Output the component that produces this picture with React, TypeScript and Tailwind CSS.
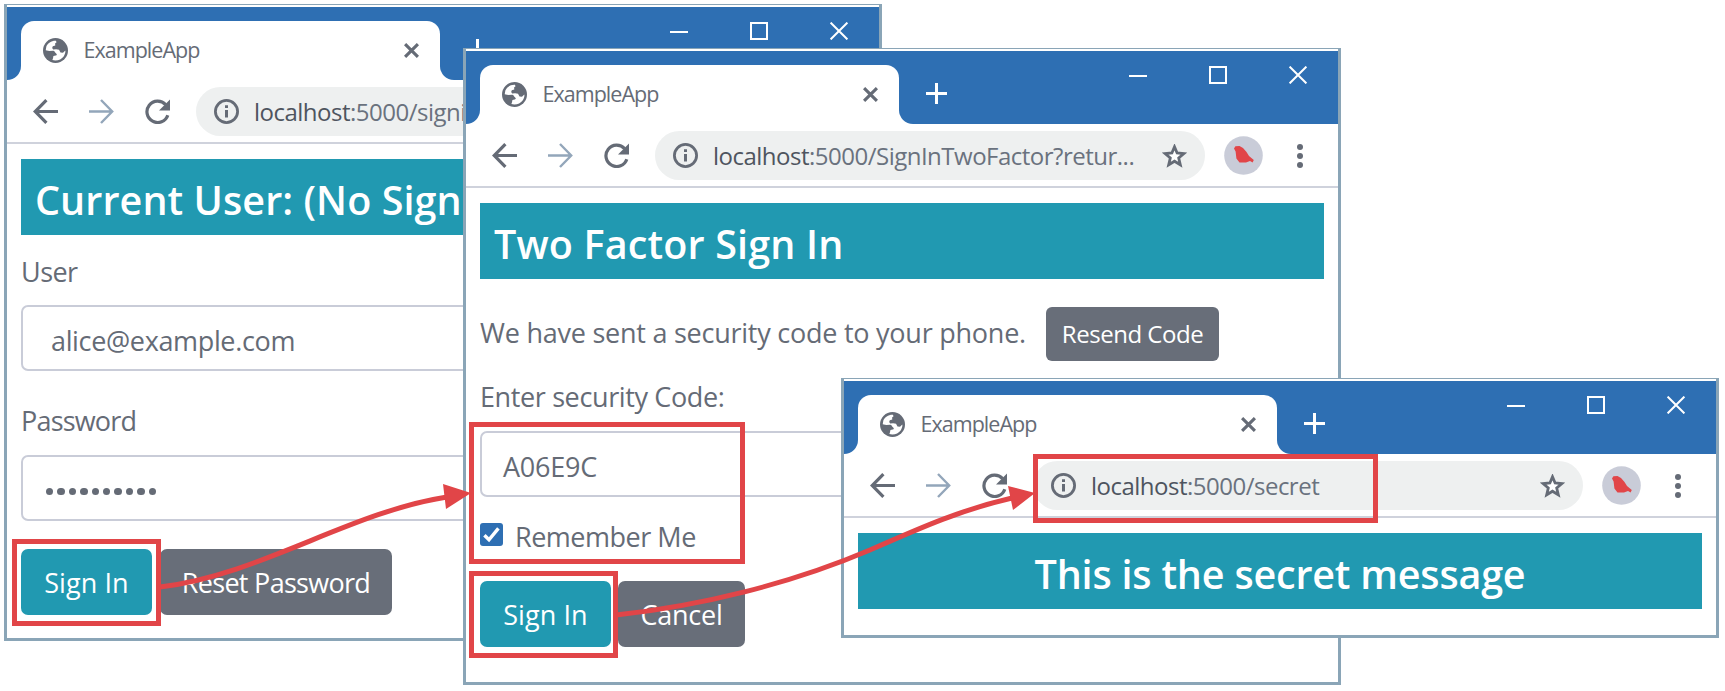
import type { ReactNode } from "react";

function Globe() {
  return (
    <svg viewBox="0 0 24 24" className="h-[25px] w-[25px] shrink-0">
      <circle cx="12" cy="12" r="12" fill="#656b76" />
      <path
        d="M12.4 2.6 C8 2.4 4.6 4.8 3.2 8.2 L2.6 11.8 L6 12.4 L9.8 12.2 C11.4 12.4 11.2 13.8 12.4 14.6 C13.6 15.4 13.6 16.6 12.2 16.8 L10 17.2 L9.6 19.4 L9 21.2 C13.2 22.4 17.6 20.8 20 17.4 C21.2 15.4 21.8 13.2 21.4 12 L19.2 14.2 L16.8 14 L15.4 11.2 L12.6 10.8 L9.8 11 L8.8 9.6 L9.4 8 L11.8 7.2 L11.6 5.2 L13 4 Z"
        fill="#fff"
      />
    </svg>
  );
}

function Bird() {
  return (
    <svg viewBox="0 0 39 39" className="h-[39px] w-[39px] shrink-0">
      <circle cx="19.5" cy="19.5" r="19.3" fill="#c9ccd8" />
      <path d="M10 12.6 L11.4 10.2 L15.5 10 L19 12 L22.5 16 L25 20 L29.8 24 L28.6 26.4 L26 25 L22 26.4 L15.5 26.4 L12.4 22.5 L11.6 15.5 Z" fill="#e14548" />
    </svg>
  );
}

function TitleBar() {
  return (
    <div className="flex h-[73px] bg-white">
      <div className="w-[14px] rounded-br-[14px] bg-[#2e6fb3]" />
      <div className="flex w-[419px] flex-col bg-[#2e6fb3] pt-[14px]">
        <div className="flex flex-1 items-start rounded-t-[13px] bg-white pl-[22px] pr-[21px] pt-[17px]">
          <Globe />
          <span className="-mt-px ml-[15.5px] text-[21.5px] leading-[25px] tracking-[-0.045em]">ExampleApp</span>
          <svg viewBox="0 0 14 14" className="ml-auto mt-[5px] h-[15px] w-[15px]">
            <path d="M1 1 L13 13 M13 1 L1 13" stroke="#656b76" strokeWidth="2.9" />
          </svg>
        </div>
      </div>
      <div className="flex flex-1 items-start rounded-bl-[14px] bg-[#2e6fb3] pl-[27px] pr-[31px]">
        <svg viewBox="0 0 21 21" className="mt-[32px] h-[21px] w-[21px]">
          <path d="M10.5 0 V21 M0 10.5 H21" stroke="#fff" strokeWidth="3" />
        </svg>
        <div className="ml-auto mt-[15px] flex gap-[62px]">
          <svg viewBox="0 0 18 18" className="h-[18px] w-[18px]">
            <path d="M0 10 H18" stroke="#fff" strokeWidth="2" />
          </svg>
          <svg viewBox="0 0 18 18" className="h-[18px] w-[18px]">
            <rect x="1" y="1" width="16" height="16" fill="none" stroke="#fff" strokeWidth="2" />
          </svg>
          <svg viewBox="0 0 18 18" className="h-[18px] w-[18px]">
            <path d="M0.6 0.6 L17.4 17.4 M17.4 0.6 L0.6 17.4" stroke="#fff" strokeWidth="2" />
          </svg>
        </div>
      </div>
    </div>
  );
}

function Toolbar({ path }: { path: string }) {
  return (
    <div className="flex h-[64px] items-start border-b-2 border-[#cfd2dc] pl-[26px] pt-[7px]">
      <div className="flex h-[49px] items-center gap-[31px]">
        <svg viewBox="0 0 25 25" className="h-[25px] w-[25px]">
          <path d="M25 12.5 H2.4 M13.4 1.2 L2.2 12.5 L13.4 23.8" fill="none" stroke="#656b76" strokeWidth="3.2" />
        </svg>
        <svg viewBox="0 0 25 25" className="h-[25px] w-[25px]">
          <path d="M0 12.5 H23 M12 1 L23.2 12.5 L12 24" fill="none" stroke="#93a6ba" strokeWidth="2.4" />
        </svg>
        <svg viewBox="0 0 25 25" className="h-[25px] w-[25px]">
          <path d="M20.6 5.6 A10.7 10.7 0 1 0 22.8 16.2" fill="none" stroke="#656b76" strokeWidth="3.2" />
          <path d="M25 0.4 V11.4 H14 Z" fill="#656b76" />
        </svg>
      </div>
      <div className="ml-[26px] flex h-[49px] w-[550px] items-center rounded-full bg-[#eef0f0] pl-[18px] pr-[18px]">
        <svg viewBox="0 0 25 25" className="h-[25px] w-[25px] shrink-0">
          <circle cx="12.5" cy="12.5" r="11.1" fill="none" stroke="#656b76" strokeWidth="2.8" />
          <path d="M12.5 11 V18.6 M12.5 6.2 V9" stroke="#656b76" strokeWidth="3" />
        </svg>
        <span className="ml-[15px] whitespace-nowrap text-[24px] leading-[32px] tracking-[-0.021em] text-[#6a727e]">
          <span className="text-[#4e555f]">localhost</span>
          {path}
        </span>
        <svg viewBox="0 0 24 24" className="ml-auto h-[24px] w-[25px] shrink-0">
          <path
            d="M12 2.8 L14.6 9 L21.4 9.6 L16.2 14 L17.8 20.8 L12 17.2 L6.2 20.8 L7.8 14 L2.6 9.6 L9.4 9 Z"
            fill="#fff"
            stroke="#656b76"
            strokeWidth="2.8"
          />
        </svg>
      </div>
      <div className="ml-[19px] mt-[5px] flex items-center">
        <Bird />
        <svg viewBox="0 0 6 24" className="ml-[34px] h-[24px] w-[6px]">
          <circle cx="3" cy="3" r="3" fill="#656b76" />
          <circle cx="3" cy="12" r="3" fill="#656b76" />
          <circle cx="3" cy="21" r="3" fill="#656b76" />
        </svg>
      </div>
    </div>
  );
}

function BrowserWindow({ place, path, children }: { place: string; path: string; children: ReactNode }) {
  return (
    <div className={`absolute w-[878px] overflow-hidden border-x-3 border-b-3 border-t border-[#8aa5b7] bg-white pt-[2px] ${place}`}>
      <TitleBar />
      <Toolbar path={path} />
      <div className="px-[14px] pt-[15px]">{children}</div>
    </div>
  );
}

function Banner({ children, look }: { children: ReactNode; look: string }) {
  return (
    <h1
      className={`h-[76px] whitespace-nowrap bg-[#2199b1] px-[14px] pt-[11px] text-[39.5px] font-semibold leading-[60px] text-white ${look}`}
    >
      {children}
    </h1>
  );
}

function Button({ children, look }: { children: ReactNode; look: string }) {
  return (
    <button
      className={`flex h-[66px] items-center justify-center whitespace-nowrap rounded-[7px] pt-[2px] text-[27px] leading-[36px] text-white ${look}`}
    >
      {children}
    </button>
  );
}

function Field({ children }: { children: ReactNode }) {
  return (
    <div className="flex h-[66px] items-center rounded-[7px] border-2 border-[#c9ccd8] bg-white text-[27px] leading-[36px]">
      {children}
    </div>
  );
}

export default function App() {
  return (
    <div className="relative h-[691px] w-[1725px] overflow-hidden bg-white font-['Open_Sans','Noto_Sans',sans-serif] text-[#656b76]">
      <BrowserWindow place="left-[4px] top-[4px] h-[637px]" path=":5000/signin">
        <Banner look="tracking-[0.002em]">Current User: (No Signed In User)</Banner>
        <p className="mt-[19px] text-[27px] leading-[36px] tracking-[-0.02em]">User</p>
        <div className="mt-[15px]">
          <Field>
            <span className="ml-[28px] mt-[5px] tracking-[-0.013em]">alice@example.com</span>
          </Field>
        </div>
        <p className="mt-[32px] text-[27px] leading-[36px] tracking-[-0.03em]">Password</p>
        <div className="mt-[16px]">
          <Field>
            <span className="ml-[23px] flex gap-[4px]">
              {Array.from({ length: 10 }, (_, i) => (
                <span key={i} className="mt-[7px] h-[7.4px] w-[7.4px] rounded-full bg-[#656b76]" />
              ))}
            </span>
          </Field>
        </div>
        <div className="mt-[28px] flex gap-[8px]">
          <Button look="w-[131px] bg-[#2199b1] tracking-[0.003em]">Sign In</Button>
          <Button look="w-[232px] bg-[#686e79] tracking-[-0.026em]">Reset Password</Button>
        </div>
      </BrowserWindow>

      <BrowserWindow place="left-[463px] top-[48px] h-[637px]" path=":5000/SignInTwoFactor?retur...">
        <Banner look="tracking-[0.004em]">Two Factor Sign In</Banner>
        <div className="mt-[28px] flex">
          <p className="mt-[8px] w-[566px] whitespace-nowrap text-[27px] leading-[36px] tracking-[-0.009em]">
            We have sent a security code to your phone.
          </p>
          <button className="h-[54px] w-[173px] whitespace-nowrap rounded-[6px] bg-[#686e79] text-[24px] leading-[54px] tracking-[-0.02em] text-white">
            Resend Code
          </button>
        </div>
        <p className="mt-[18px] text-[27px] leading-[36px] tracking-[-0.014em]">Enter security Code:</p>
        <div className="mt-[16px]">
          <Field>
            <span className="ml-[21px] mt-[5px] tracking-[-0.008em]">A06E9C</span>
          </Field>
        </div>
        <div className="mt-[22px] flex items-start">
          <svg viewBox="0 0 23 23" className="mt-[4px] h-[23px] w-[23px]">
            <rect width="23" height="23" rx="3" fill="#2e6fb3" />
            <path d="M4.4 12.2 L9 16.8 L18.4 5.4" fill="none" stroke="#fff" strokeWidth="3.4" />
          </svg>
          <span className="ml-[12px] text-[27px] leading-[36px] tracking-[-0.018em]">Remember Me</span>
        </div>
        <div className="mt-[26px] flex gap-[7px]">
          <Button look="w-[131px] bg-[#2199b1] tracking-[0.003em]">Sign In</Button>
          <Button look="w-[127px] bg-[#686e79] tracking-[-0.01em]">Cancel</Button>
        </div>
      </BrowserWindow>

      <BrowserWindow place="left-[841px] top-[378px] h-[260px]" path=":5000/secret">
        <Banner look="text-center tracking-[-0.005em]">This is the secret message</Banner>
      </BrowserWindow>

      <div className="absolute left-[12px] top-[539px] h-[87px] w-[149px] border-5 border-[#e14548]" />
      <div className="absolute left-[469px] top-[422px] h-[142px] w-[276px] border-5 border-[#e14548]" />
      <div className="absolute left-[469px] top-[571px] h-[87px] w-[149px] border-5 border-[#e14548]" />
      <div className="absolute left-[1033px] top-[454px] h-[69px] w-[345px] border-5 border-[#e14548]" />
      <svg viewBox="0 0 1725 691" className="absolute left-0 top-0 h-[691px] w-[1725px]">
        <g fill="none" stroke="#e14548" strokeWidth="5">
          <path d="M160 587 C260 575 350 512 447 497" />
          <path d="M616 615 C700 606 790 584 870 550 C920 528 960 510 1012 498" />
        </g>
        <path d="M443 484 L471 493 L446 509 Z M1008 486 L1035 493 L1013 510 Z" fill="#e14548" />
      </svg>
    </div>
  );
}
